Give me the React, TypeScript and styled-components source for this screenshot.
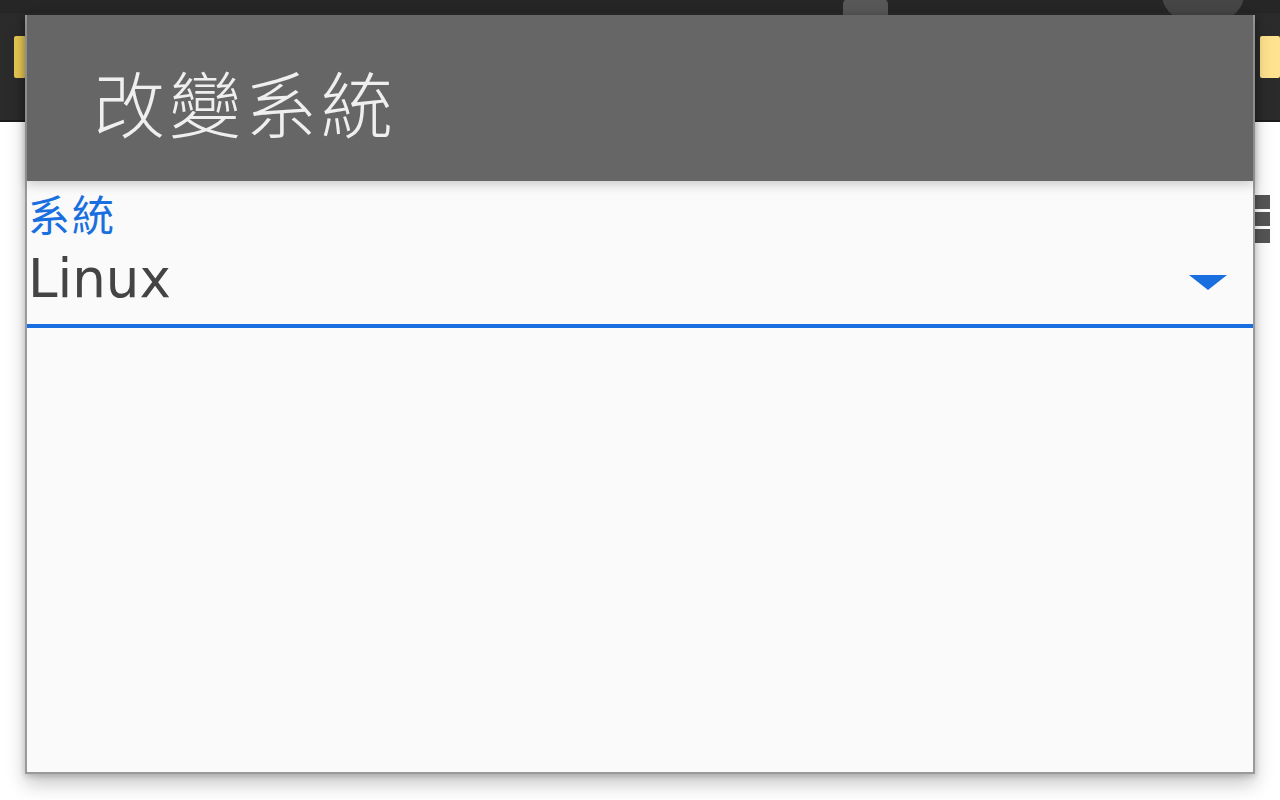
import React from 'react';
import styled, { createGlobalStyle } from 'styled-components';

const GlobalStyle = createGlobalStyle`
	html, body {
		margin: 0;
		padding: 0;
		background: #ffffff;
		font-family: Roboto, 'Noto Sans CJK TC', sans-serif;
	}
	#root {
		width: 1280px;
		height: 800px;
		overflow: hidden;
		position: relative;
	}
`;

const Page = styled.div`
	width: 1280px;
	height: 800px;
	display: flex;
	flex-direction: column;
	background: #ffffff;
`;
const AppBar = styled.div`
	height: 122px;
	box-sizing: border-box;
	background: #2b2b2b;
	border-top: 13px solid #262626;
	border-bottom: 2px solid #1c1c1c;
	display: flex;
	align-items: center;
	justify-content: space-between;
	position: relative;
`;
const YellowTab = styled.div<{ $light?: boolean }>`
	width: ${(p) => (p.$light ? '20px' : '12px')};
	height: 42px;
	margin-left: ${(p) => (p.$light ? '0' : '14px')};
	margin-top: -20px;
	background: ${(p) => (p.$light ? '#ffe38e' : '#e6c853')};
	border-radius: 2px;
`;
const Badge = styled.div`
	position: absolute;
	left: 843px;
	top: -14px;
	width: 45px;
	height: 24px;
	border-radius: 5px;
	background: #575757;
`;
const Avatar = styled.div`
	position: absolute;
	left: 1162px;
	top: -48px;
	width: 82px;
	height: 60px;
	border-radius: 50%;
	background: #454545;
`;
const Content = styled.div`
	flex: 1;
	display: flex;
	justify-content: flex-end;
	padding: 73px 10px 0 0;
`;
const Kebab = styled.div`
	display: flex;
	flex-direction: column;
	gap: 3px;
`;
const Dot = styled.div`
	width: 15px;
	height: 14px;
	background: #555555;
`;

const Dialog = styled.div`
	position: absolute;
	left: 25px;
	top: 15px;
	width: 1230px;
	height: 759px;
	box-sizing: border-box;
	background: #fafafa;
	border: 1px solid #9a9a9a;
	border-width: 0 2px 2px 2px;
	box-shadow: 0 10px 18px rgba(0, 0, 0, 0.22), 0 2px 6px rgba(0, 0, 0, 0.2);
	display: flex;
	flex-direction: column;
`;
const Header = styled.div`
	height: 166px;
	background: #666666;
	display: flex;
	align-items: center;
	padding-left: 66px;
	box-shadow: 0 4px 10px rgba(0, 0, 0, 0.18);
	position: relative;
	z-index: 1;
`;
const Title = styled.h1`
	margin: 0;
	font-family: 'Noto Sans CJK TC', sans-serif;
	font-weight: 300;
	font-size: 72px;
	letter-spacing: 4px;
	color: #efefef;
	transform: translateY(2px);
`;
const Field = styled.div`
	display: flex;
	flex-direction: column;
	padding-top: 12px;
	border-bottom: 4px solid #1a6fe0;
`;
const Label = styled.div`
	font-family: 'Noto Sans CJK TC', sans-serif;
	font-size: 42px;
	line-height: 44px;
	letter-spacing: 2px;
	color: #1a6fe0;
	padding-left: 1px;
	transform: translateY(-2px);
`;
const SelectRow = styled.div`
	display: flex;
	align-items: center;
	justify-content: space-between;
	height: 87px;
	padding-right: 26px;
`;
const Value = styled.div`
	font-family: 'DejaVu Sans', sans-serif;
	font-size: 53px;
	color: #444444;
	padding-left: 1px;
	transform: translateY(-2px);
`;
const Arrow = styled.div`
	width: 0;
	height: 0;
	border-left: 19px solid transparent;
	border-right: 19px solid transparent;
	border-top: 15px solid #1a6fe0;
	transform: translateY(2px);
`;

export default function App() {
	return (
		<>
			<GlobalStyle />
			<Page>
				<AppBar>
					<Badge />
					<Avatar />
					<YellowTab />
					<YellowTab $light />
				</AppBar>
				<Content>
					<Kebab>
						<Dot />
						<Dot />
						<Dot />
					</Kebab>
				</Content>
			</Page>
			<Dialog>
				<Header>
					<Title>改變系統</Title>
				</Header>
				<Field>
					<Label>系統</Label>
					<SelectRow>
						<Value>Linux</Value>
						<Arrow />
					</SelectRow>
				</Field>
			</Dialog>
		</>
	);
}
